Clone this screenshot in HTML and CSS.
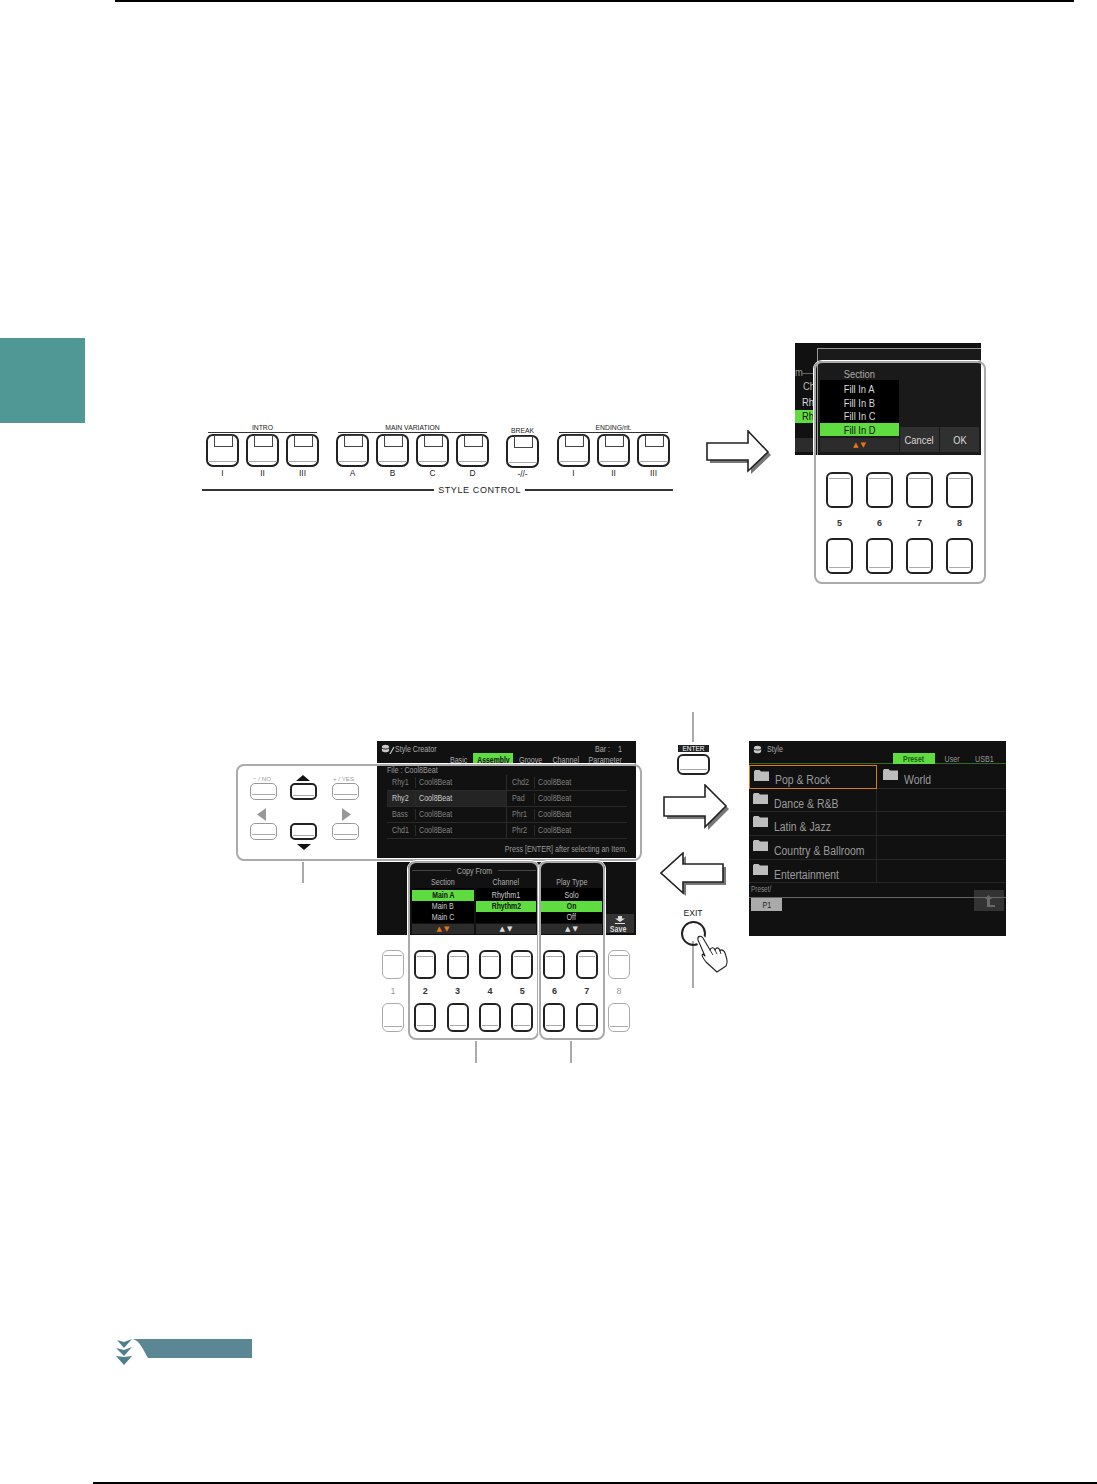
FILE: index.html
```html
<!DOCTYPE html>
<html lang="en">
<head>
  <meta charset="UTF-8">
  <meta name="viewport" content="width=device-width, initial-scale=1.0">
  <title>Style Creator - Style Assembly</title>
  <link rel="stylesheet" href="styles.css">
</head>
<body>
  <svg class="defs" width="0" height="0">
    <symbol id="folder" viewBox="0 0 15 11"><path d="M0 1.5 L1 0 H5.5 L7 1.5 H15 V11 H0 Z" fill="#bdbdbd"/></symbol>
    <symbol id="drum" viewBox="0 0 10 10"><path d="M1 3 C1 0 9 0 9 3 V7 C9 10 1 10 1 7 Z" fill="#c8c8c8"/><path d="M1 4.5 C3 6 7 6 9 4.5" stroke="#111" fill="none"/></symbol>
  </svg>

  <div class="page">
    <div class="rule-top"></div>

    <div class="row-one">
      <div class="side-tab"></div>

      <section class="fig fig-one">
        <div class="sc-panel">
          <div class="sc-groups">
            <div class="sc-group g3">
              <div class="sc-label">INTRO</div>
              <div class="sc-rule"></div>
              <div class="sc-keys"><span class="lamp-key"></span><span class="lamp-key"></span><span class="lamp-key"></span></div>
              <div class="sc-names"><span>I</span><span>II</span><span>III</span></div>
            </div>
            <div class="sc-group g4">
              <div class="sc-label">MAIN VARIATION</div>
              <div class="sc-rule"></div>
              <div class="sc-keys"><span class="lamp-key"></span><span class="lamp-key"></span><span class="lamp-key"></span><span class="lamp-key"></span></div>
              <div class="sc-names"><span>A</span><span>B</span><span>C</span><span>D</span></div>
            </div>
            <div class="sc-group g1">
              <div class="sc-label low">BREAK</div>
              <div class="sc-keys"><span class="lamp-key"></span></div>
              <div class="sc-names"><span>-//-</span></div>
            </div>
            <div class="sc-group g3 last">
              <div class="sc-label">ENDING/rit.</div>
              <div class="sc-rule"></div>
              <div class="sc-keys"><span class="lamp-key"></span><span class="lamp-key"></span><span class="lamp-key"></span></div>
              <div class="sc-names"><span>I</span><span>II</span><span>III</span></div>
            </div>
          </div>
          <div class="sc-title">STYLE CONTROL</div>
        </div>

        <svg class="arrow arrow-a" width="70" height="50" viewBox="0 0 70 50">
          <path d="M1 13 H42 V1 L62 22 L42 41 V30 H1 Z" fill="#777" transform="translate(3 3)"/>
          <path d="M1 13 H42 V1 L62 22 L42 41 V30 H1 Z" fill="#fff" stroke="#222" stroke-width="1.6"/>
        </svg>

        <div class="mini-screen">
          <span class="frag-m"><b class="cn lft">m</b></span><span class="frag-line"></span>
          <span class="frag-ch"><b class="cn lft">Ch</b></span>
          <span class="frag-rh"><b class="cn lft">Rh</b></span>
          <span class="frag-green"><b class="cn lft">Rh</b></span>
          <span class="frag-bar"></span>
          <div class="popup">
            <div class="pop-col">
              <div class="pop-head"><b class="cn">Section</b></div>
              <div class="pop-list">
                <div class="pop-item"><b class="cn">Fill In A</b></div>
                <div class="pop-item"><b class="cn">Fill In B</b></div>
                <div class="pop-item"><b class="cn">Fill In C</b></div>
                <div class="pop-item on"><b class="cn">Fill In D</b></div>
              </div>
              <div class="updown hot"><i>▲</i><i>▼</i></div>
            </div>
            <div class="pop-btn"><b class="cn">Cancel</b></div>
            <div class="pop-btn"><b class="cn">OK</b></div>
          </div>
        </div>

        <div class="outline outline-keys">
          <div class="keys-four">
            <span class="pkey line-top"></span><span class="pkey line-top"></span><span class="pkey line-top"></span><span class="pkey line-top"></span>
            <span class="knum">5</span><span class="knum">6</span><span class="knum">7</span><span class="knum">8</span>
            <span class="pkey line-bot"></span><span class="pkey line-bot"></span><span class="pkey line-bot"></span><span class="pkey line-bot"></span>
          </div>
        </div>
      </section>
    </div>

    <section class="fig fig-two">
      <!-- cursor buttons -->
      <span class="nav-text nav-no">&#8722; / NO</span>
      <span class="nav-text nav-yes">+ / YES</span>
      <span class="wide-key dim k-no"></span>
      <span class="wide-key k-up"></span>
      <span class="wide-key dim k-yes"></span>
      <span class="wide-key dim k-left"></span>
      <span class="wide-key k-down"></span>
      <span class="wide-key dim k-right"></span>
      <span class="tri-up"></span>
      <span class="tri-down"></span>
      <span class="tri-left"></span>
      <span class="tri-right"></span>

      <!-- style creator screen, top -->
      <div class="screen top-screen">
        <svg class="ttl-icon" width="14" height="10" viewBox="0 0 14 10"><use href="#drum" width="9" height="9"/><path d="M9 10 L13 3" stroke="#c8c8c8" stroke-width="1.2"/></svg>
        <span class="ttl"><b class="cn lft">Style Creator</b></span>
        <span class="bar-no"><b class="cn rgt">Bar :&nbsp;&nbsp;&nbsp;&nbsp;1</b></span>
        <div class="tabs">
          <span class="tab"><b class="cn">Basic</b></span>
          <span class="tab on"><b class="cn">Assembly</b></span>
          <span class="tab"><b class="cn">Groove</b></span>
          <span class="tab"><b class="cn">Channel</b></span>
          <span class="tab"><b class="cn">Parameter</b></span>
        </div>
        <div class="file-name"><b class="cn lft">File : Cool8Beat</b></div>
        <div class="assembly">
          <div class="a-row"><span><b class="cn lft">Rhy1</b></span><span><b class="cn lft">Cool8Beat</b></span><span><b class="cn lft">Chd2</b></span><span><b class="cn lft">Cool8Beat</b></span></div>
          <div class="a-row picked"><span><b class="cn lft">Rhy2</b></span><span><b class="cn lft">Cool8Beat</b></span><span><b class="cn lft">Pad</b></span><span><b class="cn lft">Cool8Beat</b></span></div>
          <div class="a-row"><span><b class="cn lft">Bass</b></span><span><b class="cn lft">Cool8Beat</b></span><span><b class="cn lft">Phr1</b></span><span><b class="cn lft">Cool8Beat</b></span></div>
          <div class="a-row"><span><b class="cn lft">Chd1</b></span><span><b class="cn lft">Cool8Beat</b></span><span><b class="cn lft">Phr2</b></span><span><b class="cn lft">Cool8Beat</b></span></div>
        </div>
        <div class="press-hint"><b class="cn rgt">Press [ENTER] after selecting an Item.</b></div>
      </div>

      <!-- style creator screen, bottom -->
      <div class="screen low-screen">
        <div class="copy-from">
          <div class="copy-title"><b class="cn">Copy From</b></div>
          <div class="copy-cols">
            <div class="opt-col">
              <div class="opt-head"><b class="cn">Section</b></div>
              <div class="opt-list">
                <div class="opt on"><b class="cn">Main A</b></div>
                <div class="opt"><b class="cn">Main B</b></div>
                <div class="opt"><b class="cn">Main C</b></div>
              </div>
              <div class="updown hot"><i>▲</i><i>▼</i></div>
            </div>
            <div class="opt-col">
              <div class="opt-head"><b class="cn">Channel</b></div>
              <div class="opt-list">
                <div class="opt"><b class="cn">Rhythm1</b></div>
                <div class="opt on"><b class="cn">Rhythm2</b></div>
                <div class="opt"></div>
              </div>
              <div class="updown"><i>▲</i><i>▼</i></div>
            </div>
          </div>
        </div>
        <div class="opt-col play-col">
          <div class="opt-head"><b class="cn">Play Type</b></div>
          <div class="opt-list">
            <div class="opt"><b class="cn">Solo</b></div>
            <div class="opt on"><b class="cn">On</b></div>
            <div class="opt"><b class="cn">Off</b></div>
          </div>
          <div class="updown"><i>▲</i><i>▼</i></div>
        </div>
        <div class="save-btn">
          <svg width="12" height="8" viewBox="0 0 12 8"><path d="M4 0 H8 V2.5 H11 L6 6 L1 2.5 H4 Z M1 7 H11 V8 H1 Z" fill="#ddd"/></svg>
          <span><b class="cn">Save</b></span>
        </div>
      </div>

      <div class="keys-eight">
        <span class="pkey line-top dim"></span><span class="pkey line-top"></span><span class="pkey line-top"></span><span class="pkey line-top"></span><span class="pkey line-top"></span><span class="pkey line-top"></span><span class="pkey line-top"></span><span class="pkey line-top dim"></span>
        <span class="knum dim">1</span><span class="knum">2</span><span class="knum">3</span><span class="knum">4</span><span class="knum">5</span><span class="knum">6</span><span class="knum">7</span><span class="knum dim">8</span>
        <span class="pkey line-bot dim"></span><span class="pkey line-bot"></span><span class="pkey line-bot"></span><span class="pkey line-bot"></span><span class="pkey line-bot"></span><span class="pkey line-bot"></span><span class="pkey line-bot"></span><span class="pkey line-bot dim"></span>
      </div>

      <div class="outline outline-nav"></div>
      <div class="outline outline-copy"></div>
      <div class="outline outline-play"></div>

      <span class="leader l-nav"></span>
      <span class="leader l-copy"></span>
      <span class="leader l-play"></span>
      <span class="leader l-enter"></span>
      <span class="leader l-exit"></span>

      <!-- enter / exit -->
      <span class="enter-tag">ENTER</span>
      <span class="wide-key enter-key"></span>
      <span class="exit-tag">EXIT</span>
      <span class="exit-key"></span>
      <svg class="hand" width="36" height="44" viewBox="0 0 36 44">
        <path d="M3 5 C2 1 6 0 8 3 L15 15 C16 12 19 12 20 15 C21 12 24 12 25 16 C26 14 29 15 30 18 C32 24 33 27 31 31 L22 37 L11 27 C8 23 6 20 8 19 L10 21 Z" fill="#fff" stroke="#fff" stroke-width="4"/>
        <path d="M3 5 C2 1 6 0 8 3 L15 15 C16 12 19 12 20 15 C21 12 24 12 25 16 C26 14 29 15 30 18 C32 24 33 27 31 31 L22 37 L11 27 C8 23 6 20 8 19 L10 21 Z" fill="#fff" stroke="#222" stroke-width="1.1" stroke-linejoin="round"/>
        <path d="M15 15 L18 20 M20 15 L22 19 M25 16 L26 19" stroke="#222" stroke-width="0.9" fill="none"/>
      </svg>

      <svg class="arrow arrow-b" width="72" height="50" viewBox="0 0 72 50">
        <path d="M1 13 H42 V1 L63 22 L42 43 V32 H1 Z" fill="#777" transform="translate(3 3)"/>
        <path d="M1 13 H42 V1 L63 22 L42 43 V32 H1 Z" fill="#fff" stroke="#222" stroke-width="1.6"/>
      </svg>
      <svg class="arrow arrow-c" width="72" height="50" viewBox="0 0 72 50">
        <path d="M63 12 H23 V1 L1 21 L23 41 V30 H63 Z" fill="#777" transform="translate(3 3)"/>
        <path d="M63 12 H23 V1 L1 21 L23 41 V30 H63 Z" fill="#fff" stroke="#222" stroke-width="1.6"/>
      </svg>

      <!-- style selection screen -->
      <div class="screen style-screen">
        <div class="ss-head">
          <svg width="9" height="9"><use href="#drum" width="9" height="9"/></svg>
          <span class="ttl-small"><b class="cn lft">Style</b></span>
          <div class="ss-tabs">
            <span class="ss-tab on"><b class="cn">Preset</b></span>
            <span class="ss-tab"><b class="cn">User</b></span>
            <span class="ss-tab"><b class="cn">USB1</b></span>
          </div>
        </div>
        <div class="ss-grid">
          <div class="ss-cell picked"><svg width="15" height="11"><use href="#folder"/></svg><b class="cn lft">Pop &amp; Rock</b></div>
          <div class="ss-cell"><svg width="15" height="11"><use href="#folder"/></svg><b class="cn lft">World</b></div>
          <div class="ss-cell"><svg width="15" height="11"><use href="#folder"/></svg><b class="cn lft">Dance &amp; R&amp;B</b></div>
          <div class="ss-cell"></div>
          <div class="ss-cell"><svg width="15" height="11"><use href="#folder"/></svg><b class="cn lft">Latin &amp; Jazz</b></div>
          <div class="ss-cell"></div>
          <div class="ss-cell"><svg width="15" height="11"><use href="#folder"/></svg><b class="cn lft">Country &amp; Ballroom</b></div>
          <div class="ss-cell"></div>
          <div class="ss-cell"><svg width="15" height="11"><use href="#folder"/></svg><b class="cn lft">Entertainment</b></div>
          <div class="ss-cell"></div>
        </div>
        <div class="ss-path"><b class="cn lft">Preset/</b></div>
        <div class="ss-page"><b class="cn">P1</b></div>
        <div class="ss-up">
          <svg width="14" height="14" viewBox="0 0 14 14"><path d="M3 5 L6.5 1 L10 5 H8 V11 H13 V13 H5 V5 Z" fill="#6a6a6a"/></svg>
        </div>
      </div>
    </section>

    <svg class="note-band" width="140" height="27" viewBox="0 0 140 27">
      <path d="M18 0 H137 V19 H33 C28 11 26 3 18 0 Z" fill="#5b8794"/>
      <path d="M2 1 L9 3 L17 0 L9 9 Z M1 9 L9 11 L17 8 L9 17 Z M1 17 L9 18 L17 17 L9 26 Z" fill="#4f7f8c"/>
    </svg>

    <div class="rule-bottom"></div>
  </div>
</body>
</html>
```

FILE: styles.css
```css
* {
  box-sizing: border-box;
}

body {
  margin: 0;
  background-color: #fff;
  color: #222;
  font-family: "Liberation Sans", Arial, sans-serif;
}

.defs {
  position: absolute;
}

.page {
  width: 1097px;
  height: 1484px;
  overflow: hidden;
}

.rule-top {
  width: 959px;
  height: 2px;
  margin-left: 115px;
  background-color: #000;
}

.rule-bottom {
  height: 2px;
  margin-top: 116px;
  margin-left: 93px;
  background-color: #000;
}

.row-one {
  display: flex;
  height: 247px;
  margin-top: 336px;
}

.side-tab {
  width: 85px;
  height: 85px;
  background-color: #4f9896;
}

.fig {
  position: relative;
}

.fig-one {
  width: 1012px;
  height: 247px;
}

.fig-two {
  width: 1097px;
  height: 356px;
  margin-top: 125px;
}

.fig > * {
  position: absolute;
}

/* condensed screen lettering, no narrow font is installed */
.cn {
  display: inline-block;
  font-weight: normal;
  white-space: nowrap;
  transform: scaleX(0.75);
}

.cn.lft { transform-origin: left center; }
.cn.rgt { transform-origin: right center; }

.on .cn {
  font-weight: bold;
  transform: scaleX(0.72);
}

/* style control panel */
.sc-panel {
  left: 117px;
  top: 84px;
  width: 471px;
}

.sc-groups {
  display: flex;
  gap: 17px;
  padding-left: 4px;
}

.sc-group.last {
  margin-left: 1px;
}

.g1 { width: 33px; }
.g3 { width: 113px; }
.g4 { width: 153px; }

.sc-label {
  height: 10px;
  font-size: 6.8px;
  line-height: 11px;
  text-align: center;
  white-space: nowrap;
}

.sc-label.low {
  height: 12px;
  line-height: 17px;
}

.sc-rule {
  height: 1px;
  margin: 0 2px;
  background-color: #333;
}

.sc-keys {
  display: flex;
  gap: 7px;
  margin-top: 1px;
}

.lamp-key {
  position: relative;
  width: 33px;
  height: 33px;
  border: 2px solid #222;
  border-radius: 7px;
  background: #fff;
}

.lamp-key::before {
  content: "";
  position: absolute;
  left: 6px;
  top: -1px;
  width: 17px;
  height: 10px;
  border: 1px solid #444;
}

.lamp-key::after {
  content: "";
  position: absolute;
  left: 1px;
  right: 1px;
  bottom: 3px;
  height: 1px;
  background-color: #aaa;
}

.sc-names {
  display: flex;
  gap: 7px;
  height: 13px;
  font-size: 8.4px;
  line-height: 13px;
}

.sc-names span {
  width: 33px;
  text-align: center;
  white-space: nowrap;
}

.sc-title {
  display: flex;
  align-items: center;
  gap: 4px;
  height: 14px;
  margin-top: 2px;
  font-size: 9px;
  letter-spacing: 0.6px;
  white-space: nowrap;
}

.sc-title::before,
.sc-title::after {
  content: "";
  height: 1.5px;
  background-color: #333;
}

.sc-title::before {
  flex: 1;
}

.sc-title::after {
  width: 148px;
}

/* arrows */
.arrow-a { left: 621px; top: 92px; }
.arrow-b { left: 663px; top: 74px; }
.arrow-c { left: 660px; top: 142px; }

/* first screen */
.mini-screen {
  left: 710px;
  top: 5px;
  width: 186px;
  height: 112px;
  overflow: hidden;
  background-color: #111;
  font-size: 11px;
  color: #d8d8d8;
}

.mini-screen .cn {
  transform: scaleX(0.85);
}

.mini-screen .on .cn {
  font-weight: normal;
}

.mini-screen > * {
  position: absolute;
}

.frag-m { left: 0; top: 23px; color: #999; }
.frag-line { left: 7px; top: 30px; width: 12px; height: 1px; background-color: #666; }
.frag-ch { left: 8px; top: 37px; color: #bbb; }
.frag-rh { left: 7px; top: 53px; }

.frag-green {
  left: 0;
  top: 67px;
  width: 20px;
  height: 13px;
  padding-left: 7px;
  line-height: 13px;
  background-color: #5fdc3f;
  color: #111;
}

.frag-bar {
  left: 0;
  top: 95px;
  width: 20px;
  height: 14px;
  background-color: #2c2c2c;
}

.popup {
  left: 22px;
  top: 5px;
  width: 170px;
  height: 110px;
  display: grid;
  grid-template-columns: 79px 39px 39px;
  column-gap: 1px;
  padding-left: 2px;
  border: 1px solid #999;
  background-color: #1a1a1a;
}

.pop-head {
  height: 31px;
  padding-top: 19px;
  line-height: 12px;
  text-align: center;
  color: #aaa;
}

.pop-list {
  padding-top: 2px;
  background-color: #000;
}

.pop-item {
  height: 13.5px;
  line-height: 14.5px;
  text-align: center;
}

.pop-item.on {
  background-color: #5fdc3f;
  color: #111;
}

.pop-col .updown {
  height: 14px;
  margin-top: 2px;
}

.pop-btn {
  align-self: start;
  height: 25px;
  margin-top: 78px;
  line-height: 26px;
  text-align: center;
  background-color: #303030;
}

.updown {
  display: flex;
  justify-content: center;
  align-items: center;
  gap: 2px;
  height: 10px;
  background-color: #2c2c2c;
  color: #ddd;
  font-family: "DejaVu Sans", sans-serif;
  font-size: 7px;
}

.updown i {
  font-style: normal;
}

.updown.hot {
  color: #e8761a;
}

/* rounded call-out frames */
.outline {
  z-index: 2;
  border: 2px solid #aaa;
  border-radius: 8px;
  box-shadow: 0 0 0 1px #fff;
}

.outline-keys {
  left: 729px;
  top: 23px;
  width: 172px;
  height: 223px;
  padding: 109px 0 0 10px;
}

.outline-nav { left: 236px; top: 54px; width: 406px; height: 97px; }
.outline-copy { left: 408px; top: 151px; width: 131px; height: 179px; }
.outline-play { left: 539px; top: 151px; width: 66px; height: 179px; }

/* panel keys */
.keys-four {
  display: grid;
  grid-template-columns: repeat(4, 27px);
  grid-template-rows: 36px 30px 36px;
  column-gap: 13px;
}

.keys-eight {
  left: 382px;
  top: 240px;
  display: grid;
  grid-template-columns: repeat(8, 22px);
  grid-template-rows: 29px 24px 29px;
  column-gap: 10.3px;
}

.pkey {
  position: relative;
  border: 2px solid #222;
  border-radius: 6px;
  background: #fff;
}

.pkey.dim {
  border-width: 1px;
  border-color: #aaa;
}

.pkey::after {
  content: "";
  position: absolute;
  left: 1px;
  right: 1px;
  height: 1px;
  background-color: #aaa;
}

.line-top::after { top: 4px; }
.line-bot::after { bottom: 4px; }

.knum {
  align-self: center;
  text-align: center;
  font-size: 9px;
  font-weight: bold;
  color: #333;
}

.knum.dim {
  font-weight: normal;
  color: #999;
}

/* cursor keys */
.wide-key {
  width: 27px;
  height: 17px;
  border: 2px solid #222;
  border-radius: 5px;
  background: #fff;
}

.wide-key.dim {
  border-width: 1px;
  border-color: #999;
}

.wide-key::after {
  content: "";
  display: block;
  height: 1px;
  margin: 10px 1px 0;
  background-color: #aaa;
}

.k-no { left: 250px; top: 73px; }
.k-up { left: 290px; top: 73px; }
.k-yes { left: 332px; top: 73px; }
.k-left { left: 250px; top: 113px; }
.k-down { left: 290px; top: 113px; }
.k-right { left: 332px; top: 113px; }

.nav-text {
  font-size: 6.2px;
  color: #999;
  white-space: nowrap;
}

.nav-no { left: 253px; top: 65px; }
.nav-yes { left: 333px; top: 65px; }

.tri-up, .tri-down {
  width: 14px;
  height: 6px;
  background-color: #111;
}

.tri-up { left: 296px; top: 65px; clip-path: polygon(50% 0, 100% 100%, 0 100%); }
.tri-down { left: 297px; top: 134px; clip-path: polygon(0 0, 100% 0, 50% 100%); }

.tri-left, .tri-right {
  width: 9px;
  height: 13px;
  background-color: #999;
}

.tri-left { left: 257px; top: 98px; clip-path: polygon(100% 0, 100% 100%, 0 50%); }
.tri-right { left: 342px; top: 98px; clip-path: polygon(0 0, 100% 50%, 0 100%); }

/* screens */
.screen {
  overflow: hidden;
  background-color: #111;
  color: #bbb;
  font-size: 9.5px;
}

.screen > * {
  position: absolute;
}

.top-screen {
  left: 377px;
  top: 31px;
  width: 259px;
  height: 117px;
}

.ttl-icon { left: 4px; top: 3px; }
.ttl { left: 18px; top: 2px; color: #aaa; }
.bar-no { right: 14px; top: 2px; color: #aaa; }

.tabs {
  left: 72px;
  top: 12px;
  display: grid;
  grid-template-columns: 20px 40px 28px 33px 38px;
  column-gap: 4px;
  height: 11px;
  line-height: 13px;
}

.tab {
  display: flex;
  justify-content: center;
  color: #aaa;
}

.tab.on {
  background-color: #5fdc3f;
  color: #111;
}

.file-name {
  left: 10px;
  top: 23px;
  color: #999;
}

.assembly {
  left: 10px;
  top: 34px;
  width: 240px;
}

.a-row {
  display: grid;
  grid-template-columns: 28px 91px 28px 93px;
  height: 16px;
  line-height: 14px;
  border-bottom: 1px solid #2a2a2a;
  color: #808080;
}

.a-row span {
  padding-left: 5px;
  overflow: hidden;
}

.a-row span:nth-child(2),
.a-row span:nth-child(4) {
  padding-left: 4px;
  background: linear-gradient(#2a2a2a, #2a2a2a) left 2px / 1px 11px no-repeat;
}

.a-row span:nth-child(3) {
  border-left: 1px solid #2a2a2a;
}

.a-row.picked {
  color: #ccc;
}

.a-row.picked span:nth-child(-n+2) {
  background-color: #242424;
}

.a-row.picked span:nth-child(n+3) {
  color: #808080;
}

.press-hint {
  right: 9px;
  top: 102px;
  color: #999;
}

.low-screen {
  left: 377px;
  top: 152px;
  width: 259px;
  height: 73px;
}

.copy-from {
  left: 35px;
  top: 3px;
  width: 124px;
}

.copy-title {
  display: flex;
  align-items: center;
  justify-content: center;
  height: 11px;
  color: #aaa;
}

.copy-title::before,
.copy-title::after {
  content: "";
  flex: 1;
  height: 1px;
  background-color: #444;
}

.copy-cols {
  display: grid;
  grid-template-columns: 62px 60px;
  column-gap: 2px;
}

.opt-head {
  height: 12px;
  line-height: 12px;
  text-align: center;
  color: #aaa;
}

.opt-list {
  padding-top: 2px;
  background-color: #000;
}

.opt {
  height: 11px;
  line-height: 10px;
  text-align: center;
  color: #ccc;
}

.opt.on {
  background-color: #5fdc3f;
  color: #111;
}

.opt-col .updown {
  margin-top: 1px;
}

.play-col {
  left: 164px;
  top: 14px;
  width: 61px;
}

.save-btn {
  left: 229px;
  top: 52px;
  display: flex;
  flex-direction: column;
  align-items: center;
  width: 28px;
  height: 19px;
  padding-top: 2px;
  line-height: 9px;
  background-color: #333;
  color: #ddd;
}

.save-btn .cn {
  font-weight: bold;
  margin-left: -3px;
}

/* enter / exit */
.enter-tag {
  left: 678px;
  top: 35px;
  width: 31px;
  height: 7px;
  font-size: 6.5px;
  line-height: 7px;
  text-align: center;
  background-color: #222;
  color: #fff;
}

.enter-key {
  left: 677px;
  top: 44px;
  width: 33px;
  height: 21px;
  border-radius: 6px;
}

.enter-key::after {
  margin-top: 13px;
}

.exit-tag {
  left: 680px;
  top: 198px;
  width: 26px;
  font-size: 8.6px;
  text-align: center;
}

.exit-key {
  left: 681px;
  top: 211px;
  width: 25px;
  height: 25px;
  border: 2px solid #222;
  border-radius: 50%;
}

.hand {
  left: 695px;
  top: 225px;
}

.leader {
  width: 1.5px;
  background-color: #aaa;
}

.l-nav { left: 302px; top: 151px; height: 22px; }
.l-copy { left: 475px; top: 330px; height: 23px; }
.l-play { left: 570px; top: 330px; height: 23px; }
.l-enter { left: 692px; top: 2px; height: 30px; }
.l-exit { left: 692px; top: 231px; height: 47px; }

/* style selection screen */
.style-screen {
  left: 749px;
  top: 31px;
  width: 257px;
  height: 195px;
}

.ss-head {
  left: 0;
  top: 0;
  width: 100%;
  height: 23px;
  border-bottom: 1px solid #2f6b25;
}

.ss-head > * {
  position: absolute;
}

.ss-head svg { left: 4px; top: 4px; }

.ttl-small {
  left: 18px;
  top: 2px;
  color: #aaa;
}

.ss-tabs {
  left: 144px;
  top: 12px;
  display: grid;
  grid-template-columns: 42px 30px 30px;
  column-gap: 2px;
  line-height: 11px;
}

.ss-tab {
  display: flex;
  justify-content: center;
  color: #999;
}

.ss-tab.on {
  background-color: #5fdc3f;
  color: #1b5a10;
}

.ss-grid {
  left: 0;
  top: 24px;
  display: grid;
  grid-template-columns: 128px 129px;
  grid-auto-rows: 23.7px;
  width: 257px;
}

.ss-cell {
  position: relative;
  padding-left: 25px;
  padding-top: 8px;
  border-bottom: 1px solid #262626;
  border-right: 1px solid #262626;
  font-size: 12px;
  line-height: 15px;
  color: #9a9a9a;
}

.style-screen .ss-cell .cn {
  transform: scaleX(0.87);
}

.ss-cell svg {
  position: absolute;
  left: 4px;
  top: 4px;
}

.ss-cell.picked {
  padding-top: 7px;
  border: 1px solid #e07a14;
}

.ss-cell:nth-child(even) {
  border-right: 0;
  padding-left: 27px;
}

.ss-cell:nth-child(even) svg {
  left: 6px;
}

.ss-path {
  left: 2px;
  top: 143px;
  color: #888;
  font-size: 8.5px;
}

.style-screen::after {
  content: "";
  position: absolute;
  left: 0;
  right: 0;
  top: 156px;
  height: 1px;
  background-color: #666;
}

.ss-page {
  left: 2px;
  top: 157px;
  width: 31px;
  height: 13px;
  line-height: 13px;
  text-align: center;
  background-color: #aaa;
  color: #222;
}

.ss-up {
  left: 225px;
  top: 149px;
  display: flex;
  align-items: center;
  justify-content: center;
  width: 30px;
  height: 21px;
  background-color: #333;
}

/* note marker */
.note-band {
  display: block;
  margin-top: 273px;
  margin-left: 115px;
}
```
